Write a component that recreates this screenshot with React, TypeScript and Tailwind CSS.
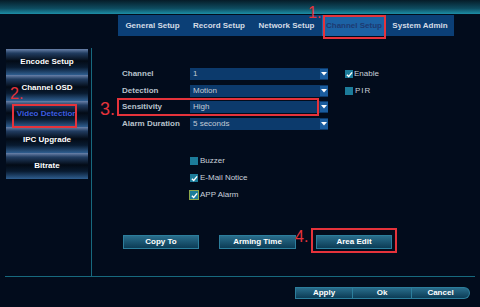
const tabs = [
  { label: "General Setup", w: "w-[69px]" },
  { label: "Record Setup", w: "w-[64px]" },
  { label: "Network Setup", w: "w-[71px]" },
  { label: "Channel Setup", w: "w-[64px]" },
  { label: "System Admin", w: "w-[68px]" },
];
const menu = ["Encode Setup", "Channel OSD", "Video Detection", "IPC Upgrade", "Bitrate"];

const rows = [
  { label: "Channel", value: "1" },
  { label: "Detection", value: "Motion" },
  { label: "Sensitivity", value: "High" },
  { label: "Alarm Duration", value: "5 seconds" },
];

const Check = ({ on, ring }: { on?: boolean; ring?: boolean }) => (
  <span
    className={`flex h-[8px] w-[8px] shrink-0 items-center justify-center bg-[#1c7c9a] ${
      ring ? "outline outline-1 outline-[#8ea84a]" : ""
    }`}
  >
    {on && (
      <svg width="7" height="7" viewBox="0 0 8 8">
        <path d="M1 4.2 L3.1 6.3 L7 1.6" fill="none" stroke="#fff" strokeWidth="1.6" />
      </svg>
    )}
  </span>
);

const Select = ({ value }: { value: string }) => (
  <div className="flex h-[12px] w-[138px] items-center justify-between bg-[#0c3a6c] pl-[3px]">
    <span className="text-[8px] text-[#c4ccd6]">{value}</span>
    <span className="flex h-[10px] w-[8px] items-center justify-center bg-[#1a5c9e]">
      <svg width="6" height="4" viewBox="0 0 6 4">
        <path d="M0 0 H6 L3 3.5 Z" fill="#fff" />
      </svg>
    </span>
  </div>
);

const Btn = ({ label, w }: { label: string; w: string }) => (
  <div
    className={`flex h-[14px] ${w} items-center justify-center border border-[#2c7e9c] bg-[linear-gradient(to_bottom,#2a6e8c,#0c3c56)] text-[8px] font-bold text-white`}
  >
    {label}
  </div>
);

export default function App() {
  return (
    <div className="relative h-[307px] w-[480px] overflow-hidden bg-[#020c1c] font-['Liberation_Sans',Arial,sans-serif]">
      <div className="h-[14px] bg-[linear-gradient(to_bottom,#061c28,#0e4c60_60%,#1c8ea6)]" />

      <div className="ml-[118px] mt-[1px] flex h-[21px] w-[336px] items-center whitespace-nowrap bg-[#0b3f76] text-[8px] font-bold text-[#d4dce6]">
        {tabs.map((t) => (
          <div
            key={t.label}
            className={`flex h-full ${t.w} items-center justify-center ${
              t.label === "Channel Setup" ? "bg-[#1c62a4] text-[#1d3a72]" : ""
            }`}
          >
            {t.label}
          </div>
        ))}
      </div>

      <div className="mx-[5px] mt-[12px] flex h-[229px] border-b border-[#17697e]">
        <div className="w-[87px] border-r border-[#17697e] pt-[1px]">
          {menu.map((m) => (
            <div
              key={m}
              className={`ml-[1px] flex h-[26px] w-[82px] items-center justify-center whitespace-nowrap bg-[linear-gradient(to_bottom,#6a82aa_0%,#213c60_16%,#030b16_46%,#081a30_70%,#2f5e90_100%)] text-[8px] font-bold ${
                m === "Video Detection" ? "text-[#3d5ee0]" : "text-white"
              }`}
            >
              {m}
            </div>
          ))}
        </div>

        <div className="flex-1 pl-[30px] pt-[20px]">
          <div className="flex flex-col gap-[4.7px]">
            {rows.map((r, i) => (
              <div key={r.label} className="flex h-[12px] items-center">
                <span className="w-[68px] text-[8px] font-bold text-[#b8c2cc]">{r.label}</span>
                <Select value={r.value} />
                {i === 0 && (
                  <div className="ml-[17px] flex items-center gap-[1px] text-[8px] text-[#c8d0da]">
                    <Check on />
                    <span>Enable</span>
                  </div>
                )}
                {i === 1 && (
                  <div className="ml-[17px] flex items-center gap-[2px] text-[8px] text-[#c8d0da]">
                    <Check />
                    <span className="tracking-[1px]">PIR</span>
                  </div>
                )}
              </div>
            ))}
          </div>

          <div className="ml-[68px] mt-[27px] flex flex-col gap-[9px] text-[8px] text-[#c8d0da]">
            <div className="flex h-[8px] items-center gap-[2px]">
              <Check />
              <span>Buzzer</span>
            </div>
            <div className="flex h-[8px] items-center gap-[2px]">
              <Check on />
              <span>E-Mail Notice</span>
            </div>
            <div className="flex h-[8px] items-center gap-[2px]">
              <Check on ring />
              <span>APP Alarm</span>
            </div>
          </div>

          <div className="ml-[1px] mt-[36px] flex gap-[20px]">
            <Btn label="Copy To" w="w-[76px]" />
            <Btn label="Arming Time" w="w-[77px]" />
            <Btn label="Area Edit" w="w-[76px]" />
          </div>
        </div>
      </div>

      <div className="mr-[10px] mt-[10px] flex justify-end text-[8px] font-bold text-white">
        <div className="flex h-[12px] w-[58px] items-center justify-center border border-[#2c7e9c] bg-[linear-gradient(to_bottom,#2a6e8c,#0c3c56)]">Apply</div>
        <div className="flex h-[12px] w-[59px] items-center justify-center border border-l-0 border-[#2c7e9c] bg-[linear-gradient(to_bottom,#2a6e8c,#0c3c56)]">Ok</div>
        <div className="flex h-[12px] w-[58px] items-center justify-center rounded-r-full border border-l-0 border-[#2c7e9c] bg-[linear-gradient(to_bottom,#2a6e8c,#0c3c56)]">Cancel</div>
      </div>

      {/* annotation overlays */}
      <div className="absolute left-[323px] top-[15px] h-[24px] w-[63px] border-2 border-[#e5333b]" />
      <div className="absolute left-[308px] top-[5px] text-[16px] leading-none text-[#e5333b]">1.</div>

      <div className="absolute left-[12px] top-[104px] h-[24px] w-[65px] border-2 border-[#e5333b]" />
      <div className="absolute left-[10px] top-[86px] text-[16px] leading-none text-[#e5333b]">2.</div>

      <div className="absolute left-[117px] top-[98px] h-[18px] w-[202px] border-2 border-[#e5333b]" />
      <div className="absolute left-[100px] top-[100px] text-[18px] leading-none text-[#e5333b]">3.</div>

      <div className="absolute left-[311px] top-[228px] h-[25px] w-[86px] border-2 border-[#e5333b]" />
      <div className="absolute left-[295px] top-[229px] text-[16px] leading-none text-[#e5333b]">4.</div>
    </div>
  );
}
